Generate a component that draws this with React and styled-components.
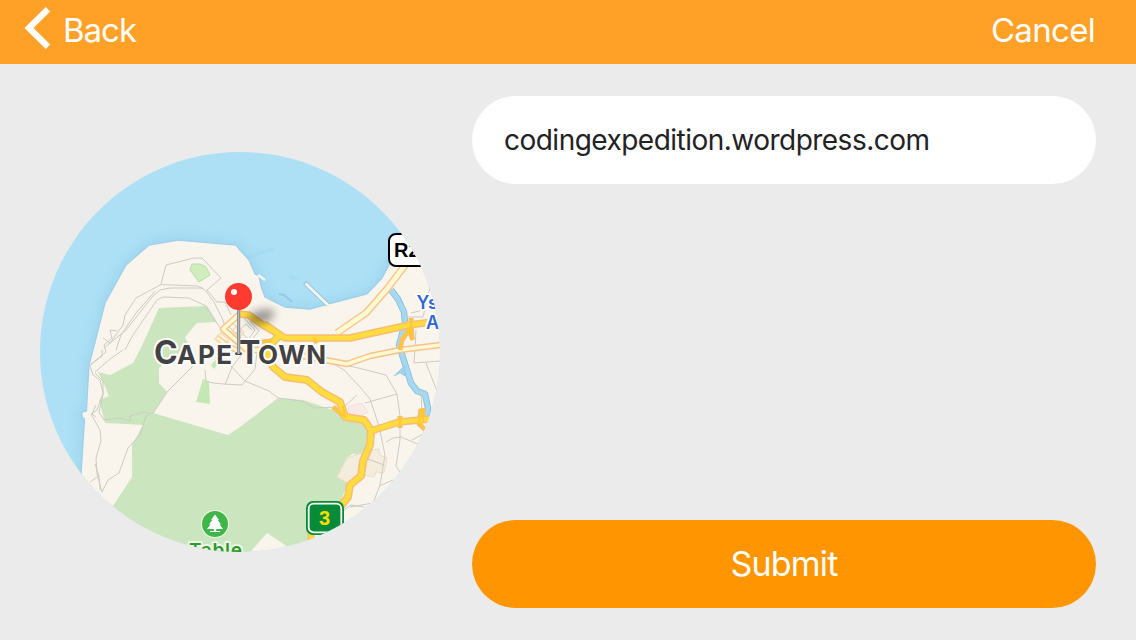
import React from "react";
import styled, { createGlobalStyle, css } from "styled-components";

const GlobalStyle = createGlobalStyle`
  * { box-sizing: border-box; }
  body { margin: 0; background: #ebebeb; font-family: Inter, "Liberation Sans", sans-serif; }
`;

const Screen = styled.div`
  width: 1136px;
  height: 640px;
  display: flex;
  flex-direction: column;
  background: #ebebeb;
  overflow: hidden;
`;

const NavBar = styled.header`
  height: 64px;
  flex: none;
  display: flex;
  justify-content: space-between;
  align-items: flex-start;
  padding: 0 41px 0 24px;
  background: #ffa126;
`;

const NavButton = styled.button`
  display: flex;
  align-items: flex-start;
  gap: 12px;
  height: 60px;
  padding: 0;
  border: 0;
  background: none;
  color: #fff;
  font: 400 33px/60px Inter, "Liberation Sans", sans-serif;
  letter-spacing: ${(p) => p.$tracking}px;
`;

const Chevron = styled.svg`
  display: block;
  width: 27px;
  height: 42px;
  margin-top: 7px;
`;

const Content = styled.main`
  flex: 1;
  display: flex;
  gap: 32px;
  padding: 32px 40px;
`;

const MapColumn = styled.section`
  width: 400px;
  display: flex;
  align-items: center;
`;

const MapCircle = styled.div`
  width: 400px;
  height: 400px;
  border-radius: 50%;
  overflow: hidden;
  background: #ade0f5;
`;

const MapSvg = styled.svg`
  display: block;
  width: 400px;
  height: 400px;
`;

const Form = styled.section`
  flex: 1;
  display: flex;
  flex-direction: column;
  justify-content: space-between;
`;

const pill = css`
  width: 100%;
  height: 88px;
  border: 0;
  border-radius: 44px;
`;

const UrlField = styled.div`
  ${pill}
  padding: 0 32px;
  background: #fff;
  color: #222224;
  font-size: 28px;
  line-height: 88px;
  letter-spacing: ${(p) => p.$tracking}px;
`;

const SubmitButton = styled.button`
  ${pill}
  padding: 0;
  background: #ff9500;
  color: #fff;
  font: 400 34px/88px Inter, "Liberation Sans", sans-serif;
  letter-spacing: ${(p) => p.$tracking}px;
`;

const Label = styled.text`
  font-family: Inter, "Liberation Sans", sans-serif;
  font-weight: ${(p) => p.$weight || 700};
  font-size: ${(p) => p.$size}px;
  fill: ${(p) => p.$color};
  stroke: ${(p) => p.$halo || "none"};
  stroke-width: 4px;
  stroke-linejoin: round;
  paint-order: stroke;
`;

const ShieldLabel = styled(Label)`
  font-family: "Liberation Sans", sans-serif;
`;

const coast =
  "M81 475L84.500 419L82 417L82 412L86.500 411L87 400L89 365L93 350L105 303L126 265L149 245L178 240L236 245L240 250L249 260L255 274L259 276L261 286L265 297L285 307L310 309L328 304L367 294L382 278L389 265L402 235L450 235V560H80Z";

const minorRoads = [
  "M161 284L166 265L194 258L202 258L221 278L207 290L217 302L225 302L231 315",
  "M103 338L110 343L123 325L125 315L136 298L161 284.500L198 286L205 290L214 302L222 318L226 329",
  "M89 366L106 352L104 345L112 338L110 330L117 331M104 348L126 330L152 297L160 290L170 288L203 288",
  "M116 350L121 335L136 313L155 291M125 350L133 335L157 300L163 297L189 298L206 306L216 322L222 330",
  "M89 366L102 356V350M95 372L110 359L123 350",
  "M90 366L93 375L100 380L103 393L97 410L91 414L100 430L101 441L96 458L97 474L102 492L108 480L119 473L128 448L140 435L146 416L154 412L167 392L195 364",
  "M95 373L103 381V395L99 412L104 420L119 418L131 421L130 416L144 412L149 413",
  "M96 417L92 414L96 405M95 464L99 476L90 482M100 490L99 476",
  "M205 370L206 381L213 383L224 384L242 385L255 369L257 352M225 385L232 367L242 354M232 367L220 355L212 347M232 367L245 381L269 391L278 398L302 401L315 408L337 407",
  "M274 351L320 356L344 370L360 387L370 399L379 426L385 455L380 485L373 503L350 507",
  "M312 360L354 367L386 375L397 394L400 416V440L396 466L400 472",
  "M345 406L357 395M365 403L397 394",
  "M386 442L393 438L401 437L420 445M412 440L425 433",
  "M368 459L384 465M379 486L393 480M344 510L351 505L364 507",
  "M407 317H423L430 287M411 313L423 310M416 330L414 363L440 361M426 363L437 391M421 391L422 413",
  "M230 320L246 337L263 351M241 315L255 330L247 341M250 321L259 331M218 337L235 350M223 332L239 347M228 326L250 346M252 330L246 324L231 338M259 331L244 348",
];

const lightRoads = [
  { d: "M406 264L387 289L366 313L347 326L337 333", w: 4.6 },
  { d: "M244 310L223 329L247 350L270 350L347 364L370 356L400 350L440 345", w: 3.6 },
  { d: "M216 337L227 345L236 350", w: 3 },
];

const highways = [
  { d: "M238 314L249 315L263 325L285 338H350L409 325L440 321", w: 4.6 },
  { d: "M264 324L280 335L272 343L267 353L273 367L285 377L307 380L322 392L340 402L345 417L364 420L371 430L370 445L363 461L361 476L350 485L348 497L341 506", w: 5 },
  { d: "M371 431L399 422L430 419", w: 4.6 },
  { d: "M262 342L272 341M314 338L317 343M333 407L345 417L343 406M400 416V428M421 409L419 424L429 433M423 408V423", w: 2 },
  { d: "M412 325L402 340L400 350M411 318L412 338M408 328L413 340", w: 2 },
  { d: "M311 532V540", w: 4 },
];

const Road = ({ d, w, edge, fill }) => (
  <g fill="none" strokeLinejoin="round">
    <path d={d} stroke={edge} strokeWidth={w + 2.8} />
    <path d={d} stroke={fill} strokeWidth={w} />
  </g>
);

const CityMap = () => (
  <MapSvg viewBox="40 152 400 400" aria-label="Map of Cape Town">
    <defs>
      <filter id="shore" x="-10%" y="-10%" width="120%" height="120%">
        <feGaussianBlur stdDeviation="5" />
      </filter>
      <filter id="soft" x="-50%" y="-150%" width="200%" height="400%">
        <feGaussianBlur stdDeviation="4.500" />
      </filter>
      <linearGradient id="needle">
        <stop offset="0" stopColor="#777" />
        <stop offset=".45" stopColor="#bcbcbc" />
        <stop offset="1" stopColor="#777" />
      </linearGradient>
    </defs>
    <path d={coast} fill="none" stroke="#94cfea" strokeWidth="8" opacity=".6" filter="url(#shore)" />
    <path d="M248 259L258 253L275 249M289 277L300 279" fill="none" stroke="#9bd4ec" strokeWidth="3" opacity=".35" />
    <path d={coast} fill="#f9f5ed" stroke="#a0cfec" strokeWidth="1.300" />
    <path d="M279 294L284 295L292 302" fill="none" stroke="#94c9e8" strokeWidth="2" />
    <path d="M304.500 282.500L328 305" stroke="#94c9e8" strokeWidth="4.500" />
    <path d="M305.500 283.500L329 306M258 275L265 280" stroke="#f9f5ed" strokeWidth="2.600" />

    <g fill="#cbe6bf">
      <path d="M159 308L207 306L217 322L197 323L185 337L190 347L180 352L159 368V383L167 392L153 413L228 435L240 427L278 398L303 400L333 410L343 418L365 420L368 430V445L357 458L354 453L347 458L337 477L348 483L340 503L310 540L288 547L267 533L252 550L245 560H113V506L132 477V445L143 425L105 423L99 400L109 396L103 382L98 372L110 375L133 363L140 350Z" />
      <path d="M203 379L209 382L210 404L196 402Z" fill="#c4e7b4" />
      <path d="M217 358L211 365L214 369L219 362L220 354Z" fill="#c4e7b4" />
    </g>
    <path d="M192 264L200 264L206 267L210 275L199 282L190 270Z" fill="#d1edbd" stroke="#b9dba8" />
    <path d="M349 406L362 403L368 412L361 416L348 414Z" fill="#faeae7" stroke="#f4ddd9" />
    <g fill="#f4ecdc" stroke="#ebdfcb">
      <path d="M337 477L347 458L356 455L362 453L360 476L348 483Z" />
      <path d="M372 450L379 449L380 455L387 458L384 473L376 472L374 477L363 475Z" />
    </g>

    <g fill="none" strokeLinejoin="round">
      <path d="M391 290L398 299L404 312L405 323L399 345L405 364L411 383L417 391L425 394L428 408L427 416" stroke="#83bddb" strokeWidth="6.400" />
      <path d="M391 290L398 299L404 312L405 323L399 345L405 364L411 383L417 391L425 394L428 408L427 416" stroke="#a6d9ef" strokeWidth="4.800" />
      <path d="M394 376L401 369L405 366V376L400 373Z" fill="#a0d4ec" stroke="#83bddb" strokeWidth=".5" />
      {minorRoads.map((d) => (
        <path key={d} d={d} stroke="#cdcac4" strokeWidth="1" />
      ))}
    </g>
    {lightRoads.map((r) => (
      <Road key={r.d} {...r} edge="#f8c38a" fill="#fff9d2" />
    ))}
    <path d="M215 339L221 333L229 340L222 345ZM237 326L244 332L239 338L232 331Z" fill="none" stroke="#f7dcae" strokeWidth="1.500" />
    <g fill="none" strokeLinejoin="round">
      {highways.map((r) => (
        <path key={r.d} d={r.d} stroke="#f8bd74" strokeWidth={r.w + 3} />
      ))}
      {highways.map((r) => (
        <path key={r.d} d={r.d} stroke={r.w < 3 ? "#ffc928" : "#ffdc3d"} strokeWidth={r.w} />
      ))}
    </g>

    <rect x="389" y="234" width="60" height="32" rx="7" fill="#fff" stroke="#000" strokeWidth="2" />
    <ShieldLabel x="394" y="257" $size={20} $color="#000">R2</ShieldLabel>

    <rect x="306" y="501" width="38" height="34" rx="7" fill="#088b38" />
    <rect x="308.700" y="503.700" width="32.600" height="28.600" rx="5" fill="none" stroke="#fff" strokeWidth="1.800" />
    <ShieldLabel x="319" y="525" $size={20} $color="#ffdd00">3</ShieldLabel>

    <Label x="416.500" y="309" $size={18} $weight={600} $color="#2f68d4" $halo="#fffdf6">Ys</Label>
    <Label x="426" y="329" $size={18} $weight={600} $color="#2f68d4" $halo="#fffdf6">A</Label>

    <circle cx="215" cy="524" r="14" fill="#eef7e5" />
    <circle cx="215" cy="524" r="13" fill="#40b54a" />
    <path d="M215 514.500L219 520H217.800L221 524.500H219.500L223 529H216.200V531H220V532H210V531H213.800V529H207L210.500 524.500H209L212.200 520H211Z" fill="#fff" />
    <Label x="189" y="556.500" textLength="53" $size={19} $weight={600} $color="#2b9b2e" $halo="#edf7e5">Table</Label>

    <ellipse cx="261" cy="317" rx="14" ry="7" fill="#000" opacity=".38" filter="url(#soft)" transform="rotate(-18 261 317)" />
    <Label x="154" y="364" $size={32} $color="#424244" $halo="#fffdf8">
      C
      <tspan x="177" fontSize="26" textLength="55">APE</tspan>
      <tspan x="239">T</tspan>
      <tspan x="258" fontSize="26" textLength="68">OWN</tspan>
    </Label>
    <ellipse cx="238.500" cy="353.500" rx="3.500" ry="1.500" fill="#444" />
    <rect x="237" y="305" width="3.200" height="49" fill="url(#needle)" />
    <circle cx="238.500" cy="296.500" r="13.500" fill="#ff3b30" />
    <circle cx="234" cy="292" r="3" fill="#fff" />
  </MapSvg>
);

export default function App() {
  return (
    <>
      <GlobalStyle />
      <Screen>
        <NavBar>
          <NavButton $tracking={-1}>
            <Chevron viewBox="0 0 27 42">
              <path d="M24 2.300L5 21L24 39.700" fill="none" stroke="#fff" strokeWidth="6.400" />
            </Chevron>
            Back
          </NavButton>
          <NavButton $tracking={-0.7}>Cancel</NavButton>
        </NavBar>
        <Content>
          <MapColumn>
            <MapCircle>
              <CityMap />
            </MapCircle>
          </MapColumn>
          <Form>
            <UrlField $tracking={-0.52}>codingexpedition.wordpress.com</UrlField>
            <SubmitButton $tracking={-0.8}>Submit</SubmitButton>
          </Form>
        </Content>
      </Screen>
    </>
  );
}
